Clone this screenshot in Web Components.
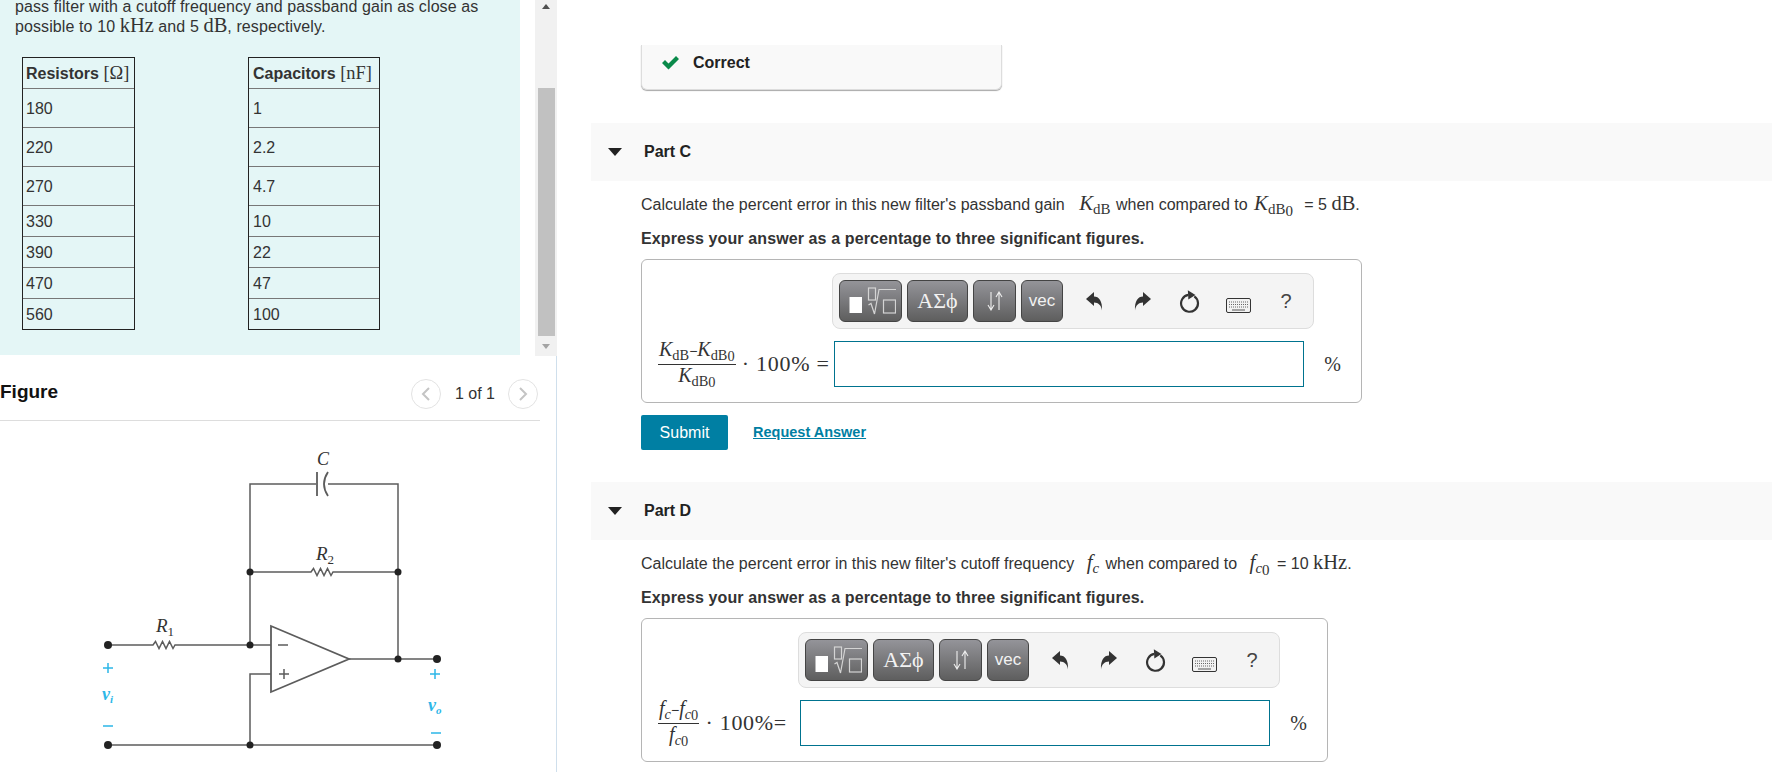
<!DOCTYPE html>
<html>
<head>
<meta charset="utf-8">
<title>Part C</title>
<style>
  html, body { margin: 0; height: 100%; overflow: hidden; background: #fff; }
  body { font: 16px/20px "Liberation Sans", Arial, sans-serif; color: #333; }
</style>
</head>
<body>
<mp-page>
  <mp-left slot="left">
    <mp-problem>
      pass filter with a cutoff frequency and passband gain as close as<br>
      possible to 10 <m-r>kHz</m-r> and 5 <m-r>dB</m-r>, respectively.
      <value-table slot="tables" width="113" pad="3" values="180,220,270,330,390,470,560">Resistors <m-r>[Ω]</m-r></value-table>
      <value-table slot="tables" width="132" pad="4" values="1,2.2,4.7,10,22,47,100">Capacitors <m-r>[nF]</m-r></value-table>
    </mp-problem>
    <figure-pane></figure-pane>
  </mp-left>
  <mp-right slot="right">
    <feedback-box>Correct</feedback-box>
    <part-block label="Part C" top="33">
      <mp-line>Calculate the percent error in this new filter's passband gain <m-i sub="dB" style="margin:0 1px 0 10px">K</m-i> when compared to <m-i sub="dB" sub2="0" style="margin:0 7px 0 2px">K</m-i> = 5 <m-r>dB</m-r>.</mp-line>
      <mp-line strong>Express your answer as a percentage to three significant figures.</mp-line>
      <answer-box width="721" tools="191" buttons>
        <m-frac slot="label">
          <span slot="num"><m-i sub="dB">K</m-i>−<m-i sub="dB" sub2="0">K</m-i></span>
          <span slot="den"><m-i sub="dB" sub2="0">K</m-i></span>
        </m-frac>
        <m-r slot="label">&nbsp;· 100% =</m-r>
      </answer-box>
    </part-block>
    <part-block label="Part D" top="32">
      <mp-line>Calculate the percent error in this new filter's cutoff frequency <m-i sub="c" style="margin:0 2px 0 8px">f</m-i> when compared to <m-i sub="c" sub2="0" style="margin:0 3px 0 8px">f</m-i> = 10 <m-r>kHz</m-r>.</mp-line>
      <mp-line strong>Express your answer as a percentage to three significant figures.</mp-line>
      <answer-box width="687" tools="157">
        <m-frac slot="label">
          <span slot="num"><m-i sub="c">f</m-i>−<m-i sub="c" sub2="0">f</m-i></span>
          <span slot="den"><m-i sub="c" sub2="0">f</m-i></span>
        </m-frac>
        <m-r slot="label">&nbsp;· 100%=</m-r>
      </answer-box>
    </part-block>
  </mp-right>
</mp-page>

<script>
const shadow = (el, html) => {
  el.attachShadow({ mode: "open" }).innerHTML = html;
};

class MpPage extends HTMLElement {
  constructor() {
    super();
    shadow(this, `<style>
      :host { display: flex; width: 1772px; height: 772px; overflow: hidden; }
      .left { flex: 0 0 557px; }
      .right { flex: 1; min-width: 0; }
    </style>
    <div class="left"><slot name="left"></slot></div>
    <div class="right"><slot name="right"></slot></div>`);
  }
}

class MpLeft extends HTMLElement {
  constructor() {
    super();
    shadow(this, `<style>:host { display: flex; flex-direction: column; height: 772px; }</style><slot></slot>`);
  }
}

class MpRight extends HTMLElement {
  constructor() {
    super();
    shadow(this, `<style>:host { display: block; height: 772px; overflow: hidden; }</style><slot></slot>`);
  }
}

class MpProblem extends HTMLElement {
  constructor() {
    super();
    shadow(this, `<style>
      :host { display: flex; height: 356px; overflow: hidden; flex: none; }
      .panel { width: 520px; height: 355px; background: #e4f6f6; padding-left: 15px; box-sizing: border-box; overflow: hidden; }
      .txt { margin-top: -3px; height: 39px; letter-spacing: .1px; }
      .tables { display: flex; gap: 113px; margin: 21px 0 0 7px; }
      .rail { margin-left: 15px; width: 22px; height: 356px; background: #f1f1f1; display: flex; flex-direction: column; align-items: center; }
      .up, .down { width: 0; height: 0; border: 4px solid transparent; }
      .up { border-bottom: 5px solid #505050; border-top: 0; margin-top: 4px; }
      .down { border-top: 5px solid #a3a3a3; border-bottom: 0; }
      .thumb { width: 17px; height: 248px; background: #c1c1c1; margin: 79px 0 8px; }
    </style>
    <div class="panel">
      <div class="txt"><slot></slot></div>
      <div class="tables"><slot name="tables"></slot></div>
    </div>
    <div class="rail"><div class="up"></div><div class="thumb"></div><div class="down"></div></div>`);
  }
}

class ValueTable extends HTMLElement {
  constructor() {
    super();
    const pad = this.getAttribute("pad");
    const rows = this.getAttribute("values").split(",")
      .map((v, i) => `<div class="row ${i < 3 ? "tall" : ""}"><span>${v}</span></div>`).join("");
    shadow(this, `<style>
      :host { display: block; box-sizing: border-box; border: 1px solid #222; width: ${this.getAttribute("width")}px; --mr: 1.150em; }
      .head { height: 30px; display: flex; align-items: center; padding-left: ${pad}px; font-weight: bold; white-space: nowrap; }
      .head span { margin-top: 2px; }
      .row { height: 30px; border-top: 1px solid #777; display: flex; align-items: center; padding-left: ${pad}px; }
      .row span { margin-top: 2px; }
      .tall { height: 38px; }
    </style>
    <div class="head"><span><slot></slot></span></div>${rows}`);
  }
}

class FigurePane extends HTMLElement {
  constructor() {
    super();
    shadow(this, `<style>
      :host { display: block; flex: 1; width: 557px; box-sizing: border-box; border-right: 1px solid #cfdfec; padding-right: 16px; }
      .head { height: 65px; box-sizing: border-box; padding-top: 12px; border-bottom: 1px solid #ddd; display: flex; align-items: center; }
      .title { font-weight: bold; font-size: 19px; color: #111; margin-top: -4px; flex: 1; }
      .pg { width: 30px; height: 30px; border-radius: 50%; border: 1px solid #e3e3e3; box-sizing: border-box; display: flex; align-items: center; justify-content: center; }
      .pg:last-child { margin-right: 2px; }
      .count { margin: 0 13px 0 14px; }
      svg { display: block; }
      text { font-family: "Liberation Serif", serif; }
    </style>
    <div class="head">
      <div class="title">Figure</div>
      <span class="pg"><svg width="10" height="14" viewBox="0 0 10 14"><path d="M8 1 2 7l6 6" fill="none" stroke="#c4c4c4" stroke-width="2"/></svg></span>
      <span class="count">1 of 1</span>
      <span class="pg"><svg width="10" height="14" viewBox="0 0 10 14"><path d="M2 1l6 6-6 6" fill="none" stroke="#c4c4c4" stroke-width="2"/></svg></span>
    </div>
    <svg width="540" height="351" viewBox="0 422 540 351">
      <g fill="none" stroke="#5c5c5c" stroke-width="1.5">
        <path d="M108 646H153l2.500-3.500 3.500 7 3.500-7 3.500 7 3.500-7 3.500 7 2 -3.500H250H271"/>
        <path d="M250 646V485H316M328 485H398V660"/>
        <path d="M250 573H311l2.500-3.500 3.500 7 3.500-7 3.500 7 3.500-7 3.500 7 2-3.500H398"/>
        <path d="M271 627V693L349 660Z" stroke-width="1.800"/>
        <path d="M349 660H437M271 675H250V746M108 746H437"/>
        <path d="M317 473V497" stroke-width="1.800"/>
        <path d="M328 473Q320 485 328 497" stroke-width="1.800"/>
        <path d="M278 646h10M279 675h10M284 670v10"/>
      </g>
      <g fill="#222">
        <circle cx="108" cy="646" r="4"/><circle cx="250" cy="646" r="3.500"/>
        <circle cx="250" cy="573" r="3.500"/><circle cx="398" cy="573" r="3.500"/>
        <circle cx="398" cy="660" r="3.500"/><circle cx="437" cy="660" r="4"/>
        <circle cx="108" cy="746" r="4"/><circle cx="250" cy="746" r="3.500"/><circle cx="437" cy="746" r="4"/>
      </g>
      <g font-style="italic" font-size="19" fill="#333">
        <text x="317" y="466" font-size="18">C</text>
        <text x="316" y="561">R<tspan font-size="13" font-style="normal" dy="4">2</tspan></text>
        <text x="156" y="633">R<tspan font-size="13" font-style="normal" dy="4">1</tspan></text>
      </g>
      <g fill="none" stroke="#2db7e8" stroke-width="1.500">
        <path d="M103 669h10M108 664v10M103 727h10M430 675h10M435 670v10M431 734h10"/>
      </g>
      <g font-style="italic" font-weight="bold" font-size="18" fill="#2db7e8">
        <text x="102" y="701">v<tspan font-size="11" dy="3">i</tspan></text>
        <text x="428" y="712">v<tspan font-size="11" dy="3">o</tspan></text>
      </g>
    </svg>`);
  }
}

class FeedbackBox extends HTMLElement {
  constructor() {
    super();
    shadow(this, `<style>
      :host { display: flex; align-items: center; box-sizing: border-box; width: 361px; height: 45px; margin: 45px 0 0 84px; background: #f9f9f9;
        border: 1px solid #ddd; border-top: 0; border-radius: 0 0 6px 6px; box-shadow: 0 1px 1px #a8a8a8; padding: 0 0 9px 19px; font-weight: bold; color: #222; }
      svg { margin-right: 13px; }
    </style>
    <svg width="19" height="15" viewBox="0 0 19 15"><path d="M1 8l3-3 3.500 3.500L15 1l3 3L7.500 14.500Z" fill="#0a8a4a"/></svg>
    <slot></slot>`);
  }
}

class PartBlock extends HTMLElement {
  constructor() {
    super();
    shadow(this, `<style>
      :host { display: block; margin: ${this.getAttribute("top")}px 0 0 34px; }
      .bar { height: 58px; background: #f9f9f9; display: flex; align-items: center; padding-left: 17px; font-weight: bold; color: #222; }
      .tri { width: 0; height: 0; border: 7px solid transparent; border-top: 8px solid #222; border-bottom: 0; margin-right: 22px; }
      .body { padding: 13px 0 0 50px; }
    </style>
    <div class="bar"><span class="tri"></span>${this.getAttribute("label")}</div>
    <div class="body"><slot></slot></div>`);
  }
}

class MpLine extends HTMLElement {
  constructor() {
    super();
    shadow(this, `<style>
      :host { display: block; box-sizing: border-box; height: 20px; padding-top: 1px; margin-bottom: 14px; white-space: nowrap; }
      :host([strong]) { font-weight: bold; margin-bottom: 11px; letter-spacing: .11px; }
    </style><slot></slot>`);
  }
}

class MathToolbar extends HTMLElement {
  constructor() {
    super();
    shadow(this, `<style>
      :host { display: flex; align-items: center; box-sizing: border-box; width: 482px; height: 56px; background: #f4f4f4; border: 1px solid #ddd; border-radius: 8px; padding-left: 6px; }
      .b { height: 42px; box-sizing: border-box; border: 1px solid #444; border-radius: 6px; background: linear-gradient(#949499, #5e5e5e); color: #f2f2f2; display: flex; align-items: center; justify-content: center; margin-right: 5px; }
      .serif { font: 22px "Liberation Serif", serif; }
      .sans { font: 17px "Liberation Sans", sans-serif; }
      .ic { display: flex; align-items: center; justify-content: center; width: 48px; }
      .q { font: 20px "Liberation Sans", sans-serif; color: #444; }
    </style>
    <span class="b" style="width:63px"><svg width="50" height="36" viewBox="0 0 50 36">
      <rect x="3.500" y="14" width="12.500" height="16" fill="#fff"/>
      <g fill="none" stroke="#d4d4d4" stroke-width="1.200">
        <rect x="22.500" y="5" width="7" height="12"/>
        <path d="M22.500 22l2.500-1.500 3.500 10.500 4.500-24.500h17"/>
        <rect x="37.500" y="17" width="12" height="13"/>
      </g></svg></span>
    <span class="b serif" style="width:61px">ΑΣϕ</span>
    <span class="b" style="width:43px"><svg width="20" height="20" viewBox="0 0 20 20"><path d="M6 1V18M3 14l3 5 3-5M14 19V2M11 6l3-5 3 5" fill="none" stroke="#eee" stroke-width="1.100"/></svg></span>
    <span class="b sans" style="width:42px;margin-right:7px">vec</span>
    <span class="ic"><svg width="17" height="19" viewBox="0 0 17 19"><path d="M0 7 8 0v4.500c5 0 8.500 4.500 8 14-.5-5-3.500-8-8-8V14Z" fill="#333"/></svg></span>
    <span class="ic"><svg width="17" height="19" viewBox="0 0 17 19"><path d="M17 7 9 0v4.500c-5 0-8.500 4.500-8 14 .5-5 3.500-8 8-8V14Z" fill="#333"/></svg></span>
    <span class="ic"><svg width="22" height="26" viewBox="0 0 20 24"><path d="M14 7.700A7.800 7.800 0 1 1 8.500 6.400" fill="none" stroke="#333" stroke-width="2"/><path d="M8 2l7 4.500L8.500 10.500Z" fill="#333"/></svg></span>
    <span class="ic"><svg width="25" height="15" viewBox="0 0 25 15" style="margin-top:8px"><rect x=".5" y=".5" width="24" height="14" rx="1.500" fill="#f2f2f2" stroke="#333"/><path d="M3 4h19M3 6.500h19M3 9h19" stroke="#666" stroke-dasharray="1 1"/><path d="M6 12h13" stroke="#555"/></svg></span>
    <span class="ic q">?</span>`);
  }
}

class AnswerBox extends HTMLElement {
  constructor() {
    super();
    const tools = +this.getAttribute("tools");
    const buttons = this.hasAttribute("buttons") ? `<div class="actions"><span class="submit">Submit</span><span class="req">Request Answer</span></div>` : "";
    shadow(this, `<style>
      :host { display: block; }
      .box { box-sizing: border-box; width: ${this.getAttribute("width")}px; height: 144px; border: 1px solid #b5b5b5; border-radius: 6px; padding-top: 13px; }
      math-toolbar { margin-left: ${tools - 1}px; }
      .row { display: flex; align-items: center; height: 46px; margin-top: 12px; }
      .lab { width: ${tools + 1}px; box-sizing: border-box; padding-left: 16px; display: flex; align-items: center; white-space: nowrap; font-size: 17px; --mr: 22px; --mr-ls: .7px; }
      .in { box-sizing: border-box; flex: 0 0 470px; height: 46px; border: 1px solid #00738f; background: #fff; }
      .unit { flex: 1; text-align: center; font: 20px "Liberation Serif", serif; }
      .actions { display: flex; align-items: center; margin-top: 12px; }
      .submit { width: 87px; height: 35px; background: #007fa3; color: #fff; border-radius: 2px; display: flex; align-items: center; justify-content: center; }
      .req { margin: -2px 0 0 25px; color: #007fa3; font-weight: bold; font-size: 14.500px; text-decoration: underline; }
    </style>
    <div class="box">
      <math-toolbar></math-toolbar>
      <div class="row">
        <div class="lab"><slot name="label"></slot></div>
        <div class="in"></div>
        <div class="unit">%</div>
      </div>
    </div>${buttons}`);
  }
}

class MR extends HTMLElement {
  constructor() {
    super();
    shadow(this, `<style>:host { font-family: "Liberation Serif", serif; font-size: var(--mr, 1.280em); font-weight: normal; letter-spacing: var(--mr-ls, 0); line-height: 0; }</style><slot></slot>`);
  }
}

class MI extends HTMLElement {
  constructor() {
    super();
    const sub = this.getAttribute("sub");
    const sub2 = this.getAttribute("sub2");
    const inner = sub === "c" ? `<i>c</i>` : sub;
    shadow(this, `<style>
      :host { font-family: "Liberation Serif", serif; font-size: var(--mi, 1.300em); white-space: nowrap; line-height: 0; }
      i.b { font-style: italic; }
      sub { font-size: .72em; line-height: 0; vertical-align: -.3em; }
      sub span { position: relative; top: .1em; }
    </style><i class="b"><slot></slot></i><sub>${inner}${sub2 ? `<span>${sub2}</span>` : ""}</sub>`);
  }
}

class MFrac extends HTMLElement {
  constructor() {
    super();
    shadow(this, `<style>
      :host { display: inline-flex; flex-direction: column; align-items: center; font-size: 14px; line-height: 21px; --mi: 20px; }
      .n { padding: 0 1px 2px; border-bottom: 1px solid #333; }
      .d { padding-top: 2px; }
    </style>
    <div class="n"><slot name="num"></slot></div>
    <div class="d"><slot name="den"></slot></div>`);
  }
}

customElements.define("mp-page", MpPage);
customElements.define("mp-left", MpLeft);
customElements.define("mp-right", MpRight);
customElements.define("mp-problem", MpProblem);
customElements.define("value-table", ValueTable);
customElements.define("figure-pane", FigurePane);
customElements.define("feedback-box", FeedbackBox);
customElements.define("part-block", PartBlock);
customElements.define("mp-line", MpLine);
customElements.define("math-toolbar", MathToolbar);
customElements.define("answer-box", AnswerBox);
customElements.define("m-r", MR);
customElements.define("m-i", MI);
customElements.define("m-frac", MFrac);
</script>
</body>
</html>
